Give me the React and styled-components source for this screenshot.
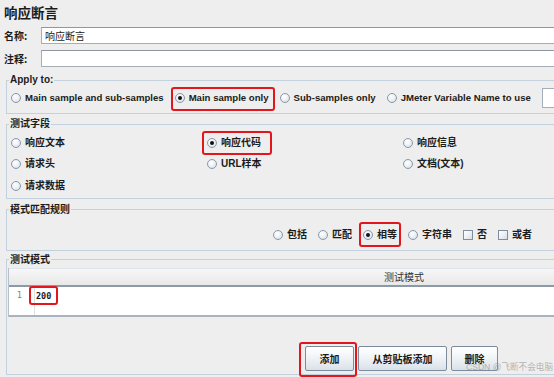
import React from 'react'
import styled, { createGlobalStyle } from 'styled-components'

const GlobalStyle = createGlobalStyle`
  html, body {
    margin: 0;
    padding: 0;
    background: #eeeeee;
  }
  body {
    font-family: "Liberation Sans", "Noto Sans CJK SC", sans-serif;
    color: #1b1b1b;
  }
`

const Page = styled.div`
  position: relative;
  width: 554px;
  height: 377px;
  overflow: hidden;
  padding-left: 4px;
  box-sizing: border-box;
  background: #eeeeee;
`
const Title = styled.div`
  height: 25px;
  line-height: 25px;
  font-size: 13.5px;
  font-weight: 700;
  font-family: "Noto Sans CJK SC", sans-serif;
`
const FieldRow = styled.div`
  display: flex;
  align-items: center;
  width: 620px;
  height: 17px;
  margin-top: ${p => p.$top}px;
`
const FieldLabel = styled.label`
  width: 37px;
  flex: none;
  font-size: 10px;
  font-weight: 700;
  font-family: "Noto Sans CJK SC", sans-serif;
`
const TextBox = styled.div`
  flex: 1;
  height: 17px;
  box-sizing: border-box;
  border: 1px solid #a4aeb9;
  border-top-color: #8e98a3;
  background: #fff;
  padding-left: 3px;
  font-size: 10px;
  line-height: 15px;
  font-family: "Noto Sans CJK SC", sans-serif;
`
const Group = styled.fieldset`
  margin: ${p => p.$top}px 0 0 2px;
  padding: ${p => p.$pad};
  width: 640px;
  min-width: 0;
  box-sizing: border-box;
  border: 1px solid #c3d0dd;
`
const Legend = styled.legend`
  margin-left: ${p => p.$shift || -2}px;
  padding: 0 1px;
  height: 12px;
  line-height: 12px;
  font-size: 10px;
  font-weight: 700;
`
const Row = styled.div`
  display: flex;
  align-items: center;
  gap: 11px;
  height: ${p => p.$h}px;
  padding-left: ${p => p.$indent || 0}px;
  font-size: ${p => p.$size}px;
`
const FieldGrid = styled.div`
  display: grid;
  grid-template-columns: 196px 196px 196px;
  grid-auto-rows: 21.5px;
  align-items: center;
  font-size: 10px;
`
const Option = styled.span`
  display: inline-flex;
  align-items: center;
  gap: 4px;
  height: 12px;
  line-height: 12px;
  font-weight: 700;
  white-space: nowrap;
  justify-self: start;
`
const Radio = styled.span`
  flex: none;
  display: flex;
  align-items: center;
  justify-content: center;
  width: 10px;
  height: 10px;
  box-sizing: border-box;
  border-radius: 50%;
  border: 1px solid #8a98a9;
  background: radial-gradient(circle at 40% 35%, #ffffff 0%, #eef2f6 45%, #cdd7e2 100%);
  &::after {
    content: '';
    display: ${p => (p.$on ? 'block' : 'none')};
    width: 4px;
    height: 4px;
    border-radius: 50%;
    background: #111;
  }
`
const Check = styled.span`
  flex: none;
  width: 10px;
  height: 10px;
  box-sizing: border-box;
  border: 1px solid #7f8d9e;
  background: linear-gradient(135deg, #ffffff 0%, #e9eef3 60%, #d3dce6 100%);
`
const Mark = styled.span`
  position: relative;
  display: inline-flex;
  justify-self: start;
  &::after {
    content: '';
    position: absolute;
    top: ${p => p.$t}px;
    right: ${p => p.$r}px;
    bottom: ${p => p.$b}px;
    left: ${p => p.$l}px;
    border: 2px solid #e4161d;
    border-radius: 3px;
    pointer-events: none;
  }
`
const VarInput = styled.span`
  flex: none;
  width: 60px;
  height: 20px;
  box-sizing: border-box;
  border: 1px solid #a4aeb9;
  background: #fff;
`
const Table = styled.div`
  width: 700px;
  border-left: 1px solid #b7c0c9;
`
const TableHead = styled.div`
  height: 16px;
  padding-left: 375px;
  line-height: 16px;
  font-size: 10px;
  font-family: "Noto Sans CJK SC", sans-serif;
  color: #333;
  background: linear-gradient(#f7f7f7, #e8e8e8);
  border-top: 1px solid #dfe4ea;
  border-bottom: 2px solid #8d99a6;
  box-sizing: content-box;
`
const Editor = styled.div`
  display: flex;
  height: 28px;
  background: #fff;
  border-bottom: 2px solid #a9b3bd;
`
const Gutter = styled.div`
  width: 26px;
  flex: none;
  box-sizing: border-box;
  padding: 3px 0 0 8px;
  border-right: 1px solid #e0e0e0;
  font-family: "DejaVu Sans Mono", monospace;
  font-size: 8px;
  line-height: 12px;
  color: #777;
`
const Code = styled.div`
  padding: 2px 0 0 1px;
  font-family: "DejaVu Sans Mono", monospace;
  font-size: 8.5px;
  font-weight: 700;
  line-height: 14px;
`
const ButtonRow = styled.div`
  display: flex;
  gap: 4px;
  margin: 29px 0 0 297px;
`
const Button = styled.button`
  width: ${p => p.$w}px;
  height: 25px;
  padding: 0;
  border: 1px solid #7d8c9d;
  border-radius: 2px;
  background: linear-gradient(#ffffff 0%, #f1f4f7 45%, #d9e1e9 100%);
  font-family: "Noto Sans CJK SC", sans-serif;
  font-size: 10px;
  font-weight: 700;
  color: #1b1b1b;
`
const Watermark = styled.div`
  position: absolute;
  right: 1px;
  bottom: 5px;
  font-size: 8.6px;
  line-height: 10px;
  color: rgba(150, 150, 150, 0.7);
  font-family: "Liberation Sans", "Noto Sans CJK SC", sans-serif;
  white-space: nowrap;
`

const Choice = ({ on, children }) => (
  <Option>
    <Radio $on={on} />
    {children}
  </Option>
)

const Box = ({ children }) => (
  <Option>
    <Check />
    {children}
  </Option>
)

export default function App() {
  return (
    <Page>
      <GlobalStyle />
      <Title>响应断言</Title>
      <FieldRow $top={2}>
        <FieldLabel>名称:</FieldLabel>
        <TextBox>响应断言</TextBox>
      </FieldRow>
      <FieldRow $top={6}>
        <FieldLabel>注释:</FieldLabel>
        <TextBox />
      </FieldRow>

      <Group $top={7} $pad="2px 0 5px 4px">
        <Legend>Apply to:</Legend>
        <Row $h={20} $size={9.6}>
          <Choice>Main sample and sub-samples</Choice>
          <Mark $t={-5} $r={-6} $b={-7} $l={-4}>
            <Choice on>Main sample only</Choice>
          </Mark>
          <Choice>Sub-samples only</Choice>
          <Choice>JMeter Variable Name to use</Choice>
          <VarInput />
        </Row>
      </Group>

      <Group $top={4} $pad="2px 0 1px 4px">
        <Legend>测试字段</Legend>
        <FieldGrid>
          <Choice>响应文本</Choice>
          <Mark $t={-6} $r={-11} $b={-6} $l={-5}>
            <Choice on>响应代码</Choice>
          </Mark>
          <Choice>响应信息</Choice>
          <Choice>请求头</Choice>
          <Choice>URL样本</Choice>
          <Choice>文档(文本)</Choice>
          <Choice>请求数据</Choice>
        </FieldGrid>
      </Group>

      <Group $top={5} $pad="13px 0 9px 4px">
        <Legend>模式匹配规则</Legend>
        <Row $h={12} $size={10} $indent={262}>
          <Choice>包括</Choice>
          <Choice>匹配</Choice>
          <Mark $t={-7} $r={-4} $b={-6} $l={-4}>
            <Choice on>相等</Choice>
          </Mark>
          <Choice>字符串</Choice>
          <Box>否</Box>
          <Box>或者</Box>
        </Row>
      </Group>

      <Group $top={3} $pad="2px 0 3px 1px">
        <Legend $shift={1}>测试模式</Legend>
        <Table>
          <TableHead>测试模式</TableHead>
          <Editor>
            <Gutter>1</Gutter>
            <Code>
              <Mark $t={-3} $r={-7} $b={-2} $l={-7}>200</Mark>
            </Code>
          </Editor>
        </Table>
        <ButtonRow>
          <Mark $t={-4} $r={-3} $b={-6} $l={-6}>
            <Button $w={49}>添加</Button>
          </Mark>
          <Button $w={89}>从剪贴板添加</Button>
          <Button $w={47}>删除</Button>
        </ButtonRow>
      </Group>

      <Watermark>CSDN @飞断不会电脑</Watermark>
    </Page>
  )
}
